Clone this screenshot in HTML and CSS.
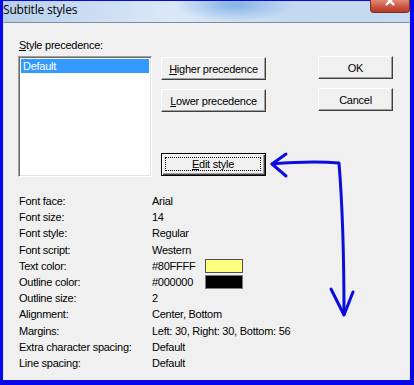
FILE: index.html
```html
<!DOCTYPE html>
<html lang="en">
<head>
    <meta charset="UTF-8">
    <title>Subtitle styles</title>
    <link rel="stylesheet" href="styles.css">
</head>
<body>
    <div class="window">
        <div class="titlebar">
            <span class="title">Subtitle styles</span>
            <div class="close-btn">
                <svg width="14" height="10" viewBox="0 0 14 10"><path d="M3,-3 L11,5 M11,-3 L3,5" stroke="#fff" stroke-width="2.4" fill="none"/></svg>
            </div>
        </div>
        <div class="client">
            <div class="top">
                <div class="list-col">
                    <div class="label"><u>S</u>tyle precedence:</div>
                    <div class="listbox">
                        <div class="item selected">Default</div>
                    </div>
                </div>
                <div class="mid-col">
                    <button class="btn"><u>H</u>igher precedence</button>
                    <button class="btn"><u>L</u>ower precedence</button>
                    <button class="btn default-btn"><span class="focus"><u>E</u>dit style</span></button>
                </div>
                <div class="right-col">
                    <button class="btn">OK</button>
                    <button class="btn">Cancel</button>
                </div>
            </div>

            <div class="props">
                <div class="prop"><span class="key">Font face:</span><span>Arial</span></div>
                <div class="prop"><span class="key">Font size:</span><span>14</span></div>
                <div class="prop"><span class="key">Font style:</span><span>Regular</span></div>
                <div class="prop"><span class="key">Font script:</span><span>Western</span></div>
                <div class="prop"><span class="key">Text color:</span><span class="hex">#80FFFF</span><span class="swatch" style="background: #ffff80;"></span></div>
                <div class="prop"><span class="key">Outline color:</span><span class="hex">#000000</span><span class="swatch dark" style="background: #000000;"></span></div>
                <div class="prop"><span class="key">Outline size:</span><span>2</span></div>
                <div class="prop"><span class="key">Alignment:</span><span>Center, Bottom</span></div>
                <div class="prop"><span class="key">Margins:</span><span>Left: 30, Right: 30, Bottom: 56</span></div>
                <div class="prop"><span class="key">Extra character spacing:</span><span>Default</span></div>
                <div class="prop"><span class="key">Line spacing:</span><span>Default</span></div>
            </div>
        </div>

        <!-- hand drawn annotation on top of the dialog -->
        <svg class="annotation" width="414" height="385" viewBox="0 0 414 385">
            <g stroke="#0c0ce0" stroke-width="3" fill="none" stroke-linecap="round" stroke-linejoin="round">
                <path d="M272,164 C290,162.5 315,161 339,163 C342,200 344,260 344,314"/>
                <path d="M286,154 L272,164 L286,176"/>
                <path d="M331,289 L344,315 L353,292"/>
            </g>
        </svg>
    </div>
</body>
</html>
```

FILE: styles.css
```css
body {
    margin: 0;
    font-family: "Liberation Sans", Arial, sans-serif;
    font-size: 11px;
    color: #000;
    background: #fff;
}
.window {
    position: relative;
    width: 414px;
    height: 385px;
    box-sizing: border-box;
    display: flex;
    flex-direction: column;
    border: 3px solid #0808ea;
    border-top-width: 1px;
    border-right-width: 4px;
    border-bottom-width: 5px;
    background: #c9dcf1;
}
.titlebar {
    position: relative;
    height: 21px;
    background:
        radial-gradient(ellipse 60px 16px at 232px 4px, rgba(120, 170, 230, 0.85), rgba(120, 170, 230, 0) 100%),
        linear-gradient(to right, #b8cfea 0%, #c9dcf2 20%, #dbe8f7 42%, #c4d9f1 70%, #c6daf1 100%);
}
.title {
    position: relative;
    top: 1px;
    left: 0;
    font-family: "Open Sans", "Noto Sans", sans-serif;
    font-size: 12px;
    letter-spacing: -0.2px;
    line-height: 16px;
}
.close-btn {
    position: absolute;
    top: -1px;
    right: 0;
    width: 38px;
    height: 12px;
    border: 1px solid #7a2f26;
    border-top: none;
    border-radius: 0 0 4px 4px;
    background: linear-gradient(#e08a78, #c9503d 60%, #b6392a);
    display: flex;
    justify-content: center;
    overflow: hidden;
}
.client {
    flex: 1;
    background: #f0f0f0;
    border-top: 1px solid #7d90a8;
    border-left: 1px solid #dde8f4;
    border-right: 1px solid #dde8f4;
    padding: 15px 0 0 14px;
}
.top {
    display: flex;
    align-items: flex-start;
}
.list-col {
    width: 134px;
}
.label {
    line-height: 14px;
    margin-bottom: 4px;
    padding-left: 1px;
    letter-spacing: -0.25px;
}
.listbox {
    height: 121px;
    box-sizing: border-box;
    background: #fff;
    border: 1px solid;
    border-color: #a0a0a0 #ffffff #ffffff #a0a0a0;
    box-shadow: inset 1px 1px 0 #696969, inset -1px -1px 0 #e3e3e3;
    padding: 2px 2px 0 2px;
}
.item {
    height: 14px;
    line-height: 14px;
    padding-left: 2px;
    letter-spacing: -0.25px;
}
.item.selected {
    background: #3399ff;
    color: #fff;
}
.mid-col {
    width: 105px;
    margin-left: 9px;
    margin-top: 19px;
    display: flex;
    flex-direction: column;
    gap: 9px;
}
.right-col {
    width: 75px;
    margin-left: 52px;
    margin-top: 18px;
    display: flex;
    flex-direction: column;
    gap: 9px;
}
.btn {
    height: 23px;
    box-sizing: border-box;
    margin: 0;
    padding: 0;
    font-family: inherit;
    font-size: 11px;
    letter-spacing: -0.25px;
    color: #000;
    background: #f0f0f0;
    border: 1px solid;
    border-color: #ffffff #404040 #404040 #ffffff;
    box-shadow: inset -1px -1px 0 #a0a0a0;
}
.default-btn {
    margin-top: 32px;
    border-color: #000;
    box-shadow: inset 1px 1px 0 #fff, inset -1px -1px 0 #404040, inset -2px -2px 0 #a0a0a0;
    padding: 3px 4px 4px 3px;
}
.focus {
    display: flex;
    align-items: center;
    justify-content: center;
    height: 100%;
    box-sizing: border-box;
    border: 1px dotted #000;
}
.props {
    margin-top: 16px;
}
.prop {
    height: 16.2px;
    display: flex;
    align-items: center;
    letter-spacing: -0.25px;
}
.key {
    width: 134px;
    padding-left: 1px;
    box-sizing: border-box;
}
.hex {
    width: 53px;
}
.swatch {
    width: 36px;
    height: 12px;
    border: 1px solid #505050;
}
.swatch.dark {
    border-color: #7a7a7a;
}
.annotation {
    position: absolute;
    top: -1px;
    left: -3px;
    pointer-events: none;
}
```
